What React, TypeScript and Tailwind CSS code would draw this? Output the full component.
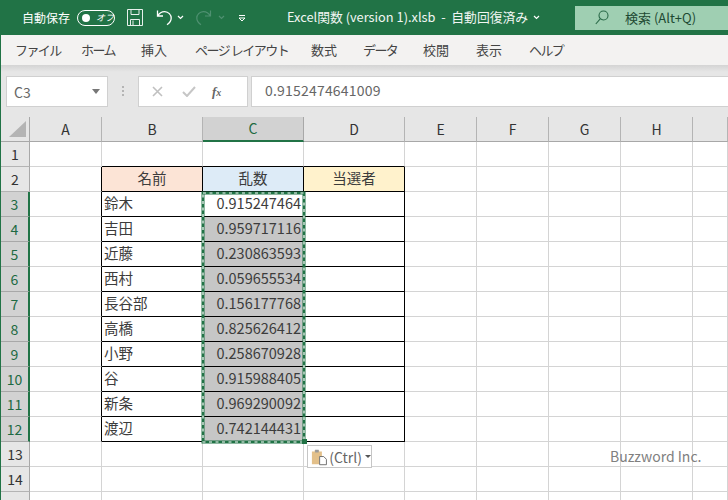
import type { ReactNode } from 'react';

const jp = 'font-["Noto_Sans_CJK_JP","Liberation_Sans",sans-serif]';

const tabs = [
  { label: 'ファイル', w: 'w-[67px] pl-[1px] tracking-[-1.600px]' },
  { label: 'ホーム', w: 'w-[60px] tracking-[-1.600px]' },
  { label: '挿入', w: 'w-[54px]' },
  { label: 'ページ レイアウト', w: 'w-[116px] tracking-[-1.500px]' },
  { label: '数式', w: 'w-[52px]' },
  { label: 'データ', w: 'w-[60px] tracking-[-1.600px]' },
  { label: '校閲', w: 'w-[53px]' },
  { label: '表示', w: 'w-[53px]' },
  { label: 'ヘルプ', w: 'w-[50px] tracking-[-1.600px]' },
];

const columns = ['A', 'B', 'C', 'D', 'E', 'F', 'G', 'H', ''];

const people = [
  ['鈴木', '0.915247464'],
  ['吉田', '0.959717116'],
  ['近藤', '0.230863593'],
  ['西村', '0.059655534'],
  ['長谷部', '0.156177768'],
  ['高橋', '0.825626412'],
  ['小野', '0.258670928'],
  ['谷', '0.915988405'],
  ['新条', '0.969290092'],
  ['渡辺', '0.742144431'],
];

function Chevron({ color = '#ffffff' }: { color?: string }) {
  return (
    <svg width="7" height="5" viewBox="0 0 7 5" fill="none" stroke={color} strokeWidth="1.2">
      <path d="M1 1l2.5 2.5L6 1" />
    </svg>
  );
}

function TitleBar() {
  return (
    <div className={`flex h-[35px] items-center bg-[#217346] text-white ${jp}`}>
      <span className="ml-[21px] text-[12px] leading-none">自動保存</span>
      <div className="ml-[7px] flex h-[16px] w-[38px] items-center rounded-full border border-white pl-[4px]">
        <span className="h-[8px] w-[8px] rounded-full bg-white" />
        <span className="ml-[6px] text-[9px] leading-none italic">オフ</span>
      </div>
      <svg className="ml-[12px]" width="16" height="17" viewBox="0 0 16 17" fill="none" stroke="#e8f0ec" strokeWidth="1">
        <path d="M.5.5h15v16H.5zM4 .5v5h8v-5M3.500 16.500v-6h9v6M6 11.500v5" />
      </svg>
      <svg className="ml-[13px]" width="17" height="17" viewBox="0 0 17 17" fill="none" stroke="#ffffff" strokeWidth="1.300">
        <path d="M1.500 1.500v5.500h5.500M1.800 6.800C3.500 3.800 6 2.500 8.800 2.600c3.600.2 6.400 3 6.400 6.500 0 2.600-1.600 5-4.200 6.600" />
      </svg>
      <span className="ml-[4px]"><Chevron /></span>
      <svg className="ml-[11px]" width="17" height="17" viewBox="0 0 17 17" fill="none" stroke="#4f9071" strokeWidth="1.200">
        <path d="M15.500 1.500v5.500H10M15.200 6.800C13.500 3.800 11 2.500 8.200 2.600 4.600 2.800 1.800 5.600 1.800 9.100c0 2.600 1.600 5 4.200 6.600" />
      </svg>
      <span className="ml-[6px]"><Chevron color="#4f9071" /></span>
      <svg className="ml-[13px]" width="8" height="8" viewBox="0 0 8 8" fill="none" stroke="#ffffff" strokeWidth="1">
        <path d="M1 1.500h6M1 4l3 3 3-3z" />
      </svg>
      <span className="ml-[41px] text-[12.800px] leading-none whitespace-nowrap text-[#f1f6f3]">Excel関数 (version 1).xlsb&nbsp; -&nbsp; 自動回復済み</span>
      <span className="ml-[5px]"><Chevron /></span>
      <div className="ml-auto flex h-[24px] w-[153px] items-center bg-[#9fcfb2] pl-[20px] text-[#1e4a33]">
        <svg width="14" height="15" viewBox="0 0 14 15" fill="none" stroke="#2a6a48" strokeWidth="1.100">
          <circle cx="8.500" cy="5.500" r="4.500" />
          <path d="M5.200 8.800L.8 14" />
        </svg>
        <span className="ml-[16px] text-[13px] leading-none whitespace-nowrap">検索 (Alt+Q)</span>
      </div>
    </div>
  );
}

function RibbonTabs() {
  return (
    <div className={`flex h-[30px] items-center bg-[#f3f2f1] pb-[1px] pl-[13px] text-[13px] text-[#444444] ${jp}`}>
      {tabs.map((t) => (
        <span key={t.label} className={`${t.w} shrink-0 whitespace-nowrap`}>{t.label}</span>
      ))}
    </div>
  );
}

function FormulaBar() {
  return (
    <div className="flex h-[52px] items-start bg-[linear-gradient(#d4d4d4,#e6e6e6_7px)] pt-[11px] pl-[5px]">
      <div className={`flex h-[31px] w-[102px] items-center justify-between border border-[#d0d0d0] bg-white px-[7px] pt-[2px] text-[14px] text-[#666666] ${jp}`}>
        <span>C3</span>
        <span className="mb-[2px] h-0 w-0 border-x-[4px] border-t-[5px] border-x-transparent border-t-[#777777]" />
      </div>
      <div className="mt-[10px] ml-[14px] flex w-[3px] flex-col gap-[2px]">
        <span className="h-[2px] w-[2px] bg-[#b4b4b4]" />
        <span className="h-[2px] w-[2px] bg-[#b4b4b4]" />
        <span className="h-[2px] w-[2px] bg-[#b4b4b4]" />
      </div>
      <div className="ml-[13px] flex h-[31px] w-[110px] items-center border border-[#d0d0d0] bg-white">
        <svg className="ml-[13px]" width="11" height="11" viewBox="0 0 11 11" fill="none" stroke="#c0c0c0" strokeWidth="1.600">
          <path d="M1 1l9 9M10 1l-9 9" />
        </svg>
        <svg className="ml-[19px]" width="14" height="11" viewBox="0 0 14 11" fill="none" stroke="#c6c6c6" strokeWidth="2">
          <path d="M1 6l4 4 8-9" />
        </svg>
        <span className="ml-[16px] font-['Liberation_Serif',serif] text-[13px] leading-none font-bold text-[#666666] italic">
          f<span className="text-[10px]">x</span>
        </span>
      </div>
      <div className={`ml-[3px] flex h-[31px] flex-1 items-center border-y border-l border-[#d0d0d0] bg-white pb-[2px] pl-[13px] text-[14px] tracking-[0.2px] text-[#666666] ${jp}`}>
        0.9152474641009
      </div>
    </div>
  );
}

function cellBorder(col: number, row: number) {
  // table sits on B2:D12, its outline and inner lines are black
  const inTable = col >= 1 && col <= 3 && row >= 2 && row <= 12;
  const rightBlack = inTable || (col === 0 && row >= 2 && row <= 12);
  const bottomBlack = inTable || (row === 1 && col >= 1 && col <= 3);
  return `${rightBlack ? 'border-r-black' : 'border-r-[#d4d4d4]'} ${bottomBlack ? 'border-b-black' : 'border-b-[#d4d4d4]'}`;
}

function Cell({ col, row }: { col: number; row: number }) {
  const person = row >= 3 && row <= 12 ? people[row - 3] : null;
  let content: ReactNode = null;
  let extra = '';
  if (row === 2 && col === 1) { content = '名前'; extra = 'justify-center bg-[#fce4d6]'; }
  if (row === 2 && col === 2) { content = '乱数'; extra = 'justify-center bg-[#ddebf7]'; }
  if (row === 2 && col === 3) { content = '当選者'; extra = 'justify-center bg-[#fff2cc]'; }
  if (person && col === 1) { content = person[0]; extra = 'pl-[2px]'; }
  if (person && col === 2) {
    content = person[1];
    extra = `justify-end pr-[2px] ${row > 3 ? 'bg-[#c6c6c6]' : ''}`;
  }
  return (
    <div className={`flex items-center overflow-hidden border-r border-b pb-[2px] leading-none whitespace-nowrap ${cellBorder(col, row)} ${extra}`}>
      {content}
    </div>
  );
}

function Sheet() {
  const rows = Array.from({ length: 15 }, (_, i) => i + 1);
  return (
    <div className={`relative grid grid-cols-[29px_72px_101px_101px_101px_72px_72px_72px_72px_35px] grid-rows-[25px] auto-rows-[25px] bg-white text-[14.500px] text-[#3c3c3c] ${jp}`}>
      <div className="relative border-r border-b border-[#a8a8a8] bg-[#e6e6e6]">
        <svg className="absolute right-[3px] bottom-[4px]" width="17" height="16" viewBox="0 0 17 16">
          <path d="M17 0v16H0z" fill="#b4b4b4" />
        </svg>
      </div>
      {columns.map((c) => (
        <div
          key={c}
          className={`flex items-center justify-center border-r text-[14px] ${c === 'C' ? 'border-r-[#a8a8a8] border-b-2 border-b-[#217346] bg-[#d2d2d2] text-[#1d6a42]' : 'border-r-[#b4b4b4] border-b border-b-[#a8a8a8] bg-[#e6e6e6] text-[#333333]'}`}
        >
          {c}
        </div>
      ))}

      {rows.map((r) => {
        const picked = r >= 3 && r <= 12;
        return [
          <div
            key={`h${r}`}
            className={`flex items-center justify-center border-b text-[14px] ${picked ? 'border-r-2 border-r-[#217346] border-b-[#a8a8a8] bg-[#d2d2d2] text-[#1d6a42]' : 'border-r border-r-[#a8a8a8] border-b-[#b4b4b4] bg-[#e6e6e6] text-[#333333]'}`}
          >
            {r}
          </div>,
          ...columns.map((_, col) => <Cell key={`${r}-${col}`} col={col} row={r} />),
        ];
      })}

      {/* copy range marching ants on C3:C12 */}
      <svg className="absolute top-[74px] left-[200px]" width="106" height="254" viewBox="0 0 106 254" fill="none">
        <rect x="2" y="2" width="101" height="249" stroke="#217346" strokeWidth="3" />
        <rect x="2" y="2" width="101" height="249" stroke="#ffffff" strokeWidth="1.200" strokeDasharray="3 3.500" />
        <rect x="101" y="248" width="5" height="5" fill="#217346" />
      </svg>

      <div className="absolute top-[328px] left-[306px] flex h-[23px] w-[65px] items-center border border-[#c6c6c6] bg-white pl-[3px] text-[14px] leading-none text-[#666666]">
        <svg width="18" height="18" viewBox="0 0 18 18">
          <path d="M1 3h3V1.500h5V3h3v6H9v8H1z" fill="#e3c08a" />
          <path d="M4.500 1h4v3h-4z" fill="#9a9a9a" />
          <path d="M9.500 8.500H14l3 3v6H9.500z" fill="#ffffff" stroke="#666666" strokeWidth="1" />
        </svg>
        <span className="ml-[2px]">(Ctrl)</span>
        <span className="ml-[3px] h-0 w-0 border-x-[3px] border-t-[3px] border-x-transparent border-t-[#555555]" />
      </div>

      <span className="absolute top-[329px] left-[609px] text-[14px] leading-[20px] whitespace-nowrap text-[#808080]">Buzzword Inc.</span>
    </div>
  );
}

export default function App() {
  return (
    <div className="h-[500px] w-[728px] overflow-hidden border-l border-l-[#217346]">
      <TitleBar />
      <RibbonTabs />
      <FormulaBar />
      <Sheet />
    </div>
  );
}
